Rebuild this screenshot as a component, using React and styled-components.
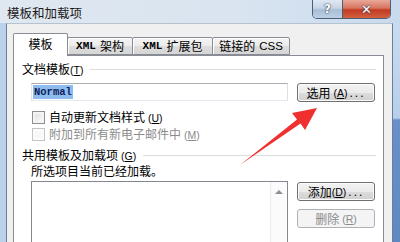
import React from "react";
import styled, { createGlobalStyle } from "styled-components";

const GlobalStyle = createGlobalStyle`
  html, body {
    margin: 0;
    padding: 0;
    background: #ffffff;
  }
  body {
    font-family: "Noto Sans CJK SC", "Noto Sans", sans-serif;
    font-size: 12px;
    color: #000000;
  }
`;

const Window = styled.div`
  position: relative;
  width: 400px;
  height: 242px;
  overflow: hidden;
  display: flex;
  flex-direction: column;
  background: #c3d7ee;
`;

const TitleBar = styled.div`
  height: 23px;
  flex: none;
  display: flex;
  justify-content: space-between;
  align-items: flex-start;
  padding-left: 7px;
  background: linear-gradient(to right, #dfe7f0 0%, #d9e4f0 60%, #c9daee 100%);
`;

const Title = styled.div`
  padding-top: 5px;
  font-size: 12.5px;
  line-height: 15px;
  color: #1a1a1a;
`;

const CaptionButtons = styled.div`
  display: flex;
  margin-right: 9px;
  height: 18px;
  border: 1px solid #4d5f75;
  border-top: none;
  border-radius: 0 0 5px 5px;
  overflow: hidden;
`;

const CaptionButton = styled.div`
  width: ${(p) => p.$w}px;
  display: flex;
  align-items: center;
  justify-content: center;
  font-family: "DejaVu Sans", sans-serif;
  font-weight: bold;
  font-size: ${(p) => (p.$close ? 13 : 12)}px;
  color: #ffffff;
  text-shadow: 0 0 2px #2c3a4c, 0 0 1px #2c3a4c;
  background: ${(p) =>
    p.$close
      ? "linear-gradient(#e9a99a 0%, #d8745f 45%, #c23a22 55%, #d2603f 100%)"
      : "linear-gradient(#dfe8f2 0%, #c6d5e6 45%, #a9bdd5 55%, #bcd0e6 100%)"};
  & + & {
    border-left: 1px solid #4d5f75;
  }
`;

const Body = styled.div`
  flex: 1;
  display: flex;
  min-height: 0;
`;

const LeftFrame = styled.div`
  width: 6px;
  flex: none;
  background: #bcd2ec;
`;

const RightFrame = styled.div`
  width: 7px;
  flex: none;
  background: linear-gradient(#c8dbf0 0px, #b7cfeb 95px, #6990c8 97px, #5f88c2 100%);
`;

const Client = styled.div`
  flex: 1;
  display: flex;
  flex-direction: column;
  background: #f0f0f0;
  border-left: 1px solid #6f7f92;
  border-right: 1px solid #6f7f92;
  border-top: 1px solid #b4c2d2;
  padding: 9px 8px 0 6px;
`;

const TabStrip = styled.div`
  display: flex;
  align-items: flex-end;
  height: 22px;
  flex: none;
  position: relative;
  z-index: 1;
`;

const Tab = styled.div`
  box-sizing: border-box;
  width: ${(p) => p.$w}px;
  height: ${(p) => (p.$active ? 23 : 18)}px;
  margin-bottom: ${(p) => (p.$active ? -1 : 0)}px;
  margin-left: ${(p) => (p.$first ? 0 : -1)}px;
  border: 1px solid #898c95;
  border-bottom: ${(p) => (p.$active ? "none" : "1px solid #898c95")};
  border-radius: 2px 2px 0 0;
  background: ${(p) =>
    p.$active ? "#ffffff" : "linear-gradient(#f4f4f4 0%, #ebebeb 50%, #dddddd 51%, #d6d6d6 100%)"};
  box-shadow: inset 1px 1px 0 #ffffff;
  display: flex;
  align-items: center;
  justify-content: center;
  gap: 4px;
  padding-bottom: ${(p) => (p.$active ? 2 : 0)}px;
  font-size: 12px;
  line-height: 14px;
  white-space: nowrap;
  position: relative;
  z-index: ${(p) => (p.$active ? 2 : 1)};
`;

const Mono = styled.span`
  font-family: "Liberation Mono", "DejaVu Sans Mono", monospace;
  font-weight: bold;
  font-size: 11px;
`;

const Latin = styled.span`
  font-family: "Liberation Sans", Arial, sans-serif;
  font-size: 11.5px;
`;

const TabPanel = styled.div`
  flex: 1;
  display: flex;
  flex-direction: column;
  background: #ffffff;
  border: 1px solid #898c95;
  border-bottom: none;
  padding: 0 7px 0 8px;
  min-height: 0;
`;

const SectionHeader = styled.div`
  display: flex;
  align-items: center;
  gap: 7px;
  margin-top: ${(p) => p.$top}px;
  height: 14px;
  line-height: 14px;
  white-space: nowrap;
  &::after {
    content: "";
    flex: 1;
    height: 1px;
    background: #dcdcdc;
  }
`;

const Key = styled.span`
  font-family: "Liberation Sans", Arial, sans-serif;
  font-size: 10.5px;
  margin-left: ${(p) => (p.$gap ? 3 : 0)}px;
  & > u {
    text-underline-offset: 1px;
  }
`;

const InputRow = styled.div`
  display: flex;
  gap: 9px;
  margin: 7px 0 0 9px;
`;

const TextBox = styled.div`
  box-sizing: border-box;
  width: 257px;
  height: 18px;
  flex: none;
  border: 1px solid #abadb3;
  border-left-color: #e2e3ea;
  border-right-color: #dbdfe6;
  border-bottom-color: #e3e9ef;
  display: flex;
  align-items: center;
  padding-left: 1px;
`;

const Selection = styled.span`
  background: #8fbcef;
  color: #0d1f5c;
  font-family: "Liberation Mono", "DejaVu Sans Mono", monospace;
  font-weight: bold;
  font-size: 10.5px;
  line-height: 14px;
  padding: 0 1px;
`;

const Button = styled.div`
  box-sizing: border-box;
  width: 78px;
  height: 19px;
  flex: none;
  border: 1px solid ${(p) => (p.$disabled ? "#adb2b5" : "#707070")};
  border-radius: 3px;
  background: ${(p) =>
    p.$disabled
      ? "#f4f4f4"
      : "linear-gradient(#f2f2f2 0%, #ebebeb 50%, #dddddd 51%, #cfcfcf 100%)"};
  box-shadow: inset 0 0 0 1px ${(p) => (p.$disabled ? "#f4f4f4" : "#fbfbfb")};
  color: ${(p) => (p.$disabled ? "#8a8a8a" : "#000000")};
  display: flex;
  align-items: center;
  justify-content: center;
  font-size: 12px;
  line-height: 14px;
  white-space: nowrap;
`;

const Dots = styled.span`
  font-family: "Liberation Sans", Arial, sans-serif;
  letter-spacing: 2px;
  margin-left: 2px;
`;

const CheckRow = styled.div`
  display: flex;
  align-items: center;
  gap: 4px;
  height: 15px;
  margin: ${(p) => p.$top}px 0 0 10px;
  line-height: 14px;
  color: ${(p) => (p.$disabled ? "#8c8c8c" : "#000000")};
  white-space: nowrap;
`;

const CheckBox = styled.span`
  box-sizing: border-box;
  width: 13px;
  height: 13px;
  flex: none;
  border: 1px solid ${(p) => (p.$disabled ? "#c4c4c4" : "#8e8f8f")};
  background: ${(p) =>
    p.$disabled ? "#f7f7f7" : "linear-gradient(135deg, #d8dbe0 0%, #f4f4f4 70%, #ffffff 100%)"};
  box-shadow: inset 0 0 0 2px ${(p) => (p.$disabled ? "#fbfbfb" : "#f4f4f4")};
`;

const Note = styled.div`
  margin: 2px 0 0 9px;
  height: 14px;
  line-height: 14px;
`;

const ListRow = styled.div`
  flex: 1;
  display: flex;
  gap: 9px;
  margin: 3px 0 0 9px;
  min-height: 0;
`;

const ListBox = styled.div`
  box-sizing: border-box;
  width: 257px;
  flex: none;
  border: 1px solid #828790;
  border-bottom: none;
  background: #ffffff;
  display: flex;
  justify-content: flex-end;
`;

const ScrollBar = styled.div`
  width: 17px;
  background: #fbfbfb;
  border-left: 1px solid #ececec;
  display: flex;
  justify-content: center;
  padding-top: 8px;
  box-sizing: border-box;
  &::before {
    content: "";
    width: 0;
    height: 0;
    border-left: 4px solid transparent;
    border-right: 4px solid transparent;
    border-bottom: 4px solid #8a8f96;
  }
`;

const ButtonColumn = styled.div`
  display: flex;
  flex-direction: column;
  gap: 8px;
  padding-top: 1px;
`;

const Overlay = styled.svg`
  position: absolute;
  left: 0;
  top: 0;
  pointer-events: none;
`;

const Shortcut = ({ k, gap }) => (
  <Key $gap={gap}>
    (<u>{k}</u>)
  </Key>
);

export default function App() {
  return (
    <>
      <GlobalStyle />
      <Window>
        <TitleBar>
          <Title>模板和加载项</Title>
          <CaptionButtons>
            <CaptionButton $w={29}>?</CaptionButton>
            <CaptionButton $w={47} $close>
              ✕
            </CaptionButton>
          </CaptionButtons>
        </TitleBar>
        <Body>
          <LeftFrame />
          <Client>
            <TabStrip>
              <Tab $w={55} $active $first>
                模板
              </Tab>
              <Tab $w={66}>
                <Mono>XML</Mono>架构
              </Tab>
              <Tab $w={81}>
                <Mono>XML</Mono>扩展包
              </Tab>
              <Tab $w={78}>
                链接的<Latin>CSS</Latin>
              </Tab>
            </TabStrip>
            <TabPanel>
              <SectionHeader $top={6}>
                <span>
                  文档模板<Shortcut k="T" />
                </span>
              </SectionHeader>
              <InputRow>
                <TextBox>
                  <Selection>Normal</Selection>
                </TextBox>
                <Button>
                  选用<Shortcut k="A" gap />
                  <Dots>...</Dots>
                </Button>
              </InputRow>
              <CheckRow $top={8}>
                <CheckBox />
                <span>
                  自动更新文档样式<Shortcut k="U" gap />
                </span>
              </CheckRow>
              <CheckRow $top={2} $disabled>
                <CheckBox $disabled />
                <span>
                  附加到所有新电子邮件中<Shortcut k="M" gap />
                </span>
              </CheckRow>
              <SectionHeader $top={6}>
                <span>
                  共用模板及加载项<Shortcut k="G" gap />
                </span>
              </SectionHeader>
              <Note>所选项目当前已经加载。</Note>
              <ListRow>
                <ListBox>
                  <ScrollBar />
                </ListBox>
                <ButtonColumn>
                  <Button>
                    添加<Shortcut k="D" />
                    <Dots>...</Dots>
                  </Button>
                  <Button $disabled>
                    删除<Shortcut k="R" gap />
                  </Button>
                </ButtonColumn>
              </ListRow>
            </TabPanel>
          </Client>
          <RightFrame />
        </Body>
        <Overlay width="400" height="242" viewBox="0 0 400 242">
          <polygon
            points="240,165 297,119.5 292,113 317,108 305,130 300.5,123.5"
            fill="#f0302e"
          />
        </Overlay>
      </Window>
    </>
  );
}
